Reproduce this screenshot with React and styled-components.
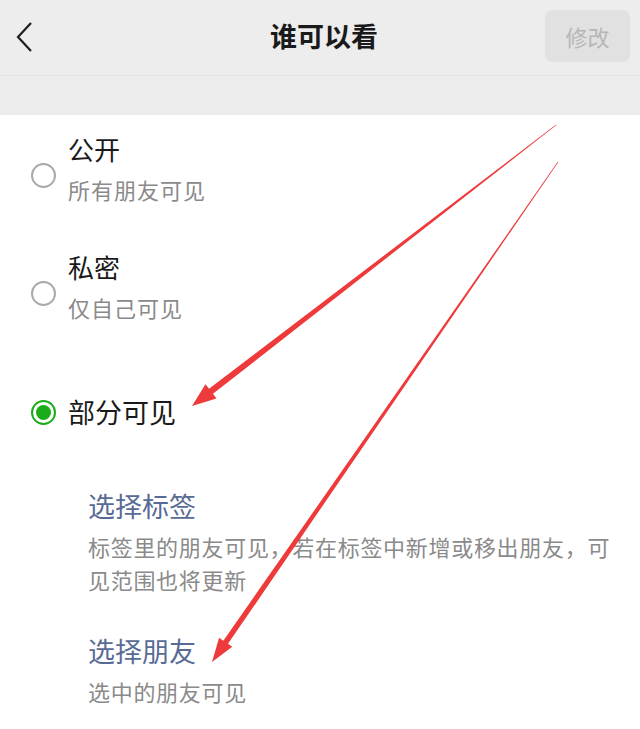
import React from "react";
import styled, { createGlobalStyle } from "styled-components";

const GlobalStyle = createGlobalStyle`
  html, body {
    margin: 0;
    padding: 0;
    background: #ffffff;
    font-family: "Noto Sans CJK SC", "Noto Sans", sans-serif;
  }
`;

function Arrow({ x1, y1, x2, y2, w0, w1, headLen, headW }) {
  const dx = x2 - x1;
  const dy = y2 - y1;
  const len = Math.sqrt(dx * dx + dy * dy);
  const ux = dx / len;
  const uy = dy / len;
  const nx = -uy;
  const ny = ux;
  // base of the head
  const bx = x2 - ux * headLen;
  const by = y2 - uy * headLen;
  const pts = [
    [x1 + nx * w0, y1 + ny * w0],
    [bx + nx * w1, by + ny * w1],
    [bx + nx * headW, by + ny * headW],
    [x2, y2],
    [bx - nx * headW, by - ny * headW],
    [bx - nx * w1, by - ny * w1],
    [x1 - nx * w0, y1 - ny * w0],
  ];
  return (
    <polygon
      points={pts.map((p) => p.join(",")).join(" ")}
      fill="#ee3a3a"
    />
  );
}

function Radio({ checked }) {
  return (
    <RadioMark checked={checked}>
      {checked && <RadioDot />}
    </RadioMark>
  );
}

export default function App() {
  return (
    <Page>
      <GlobalStyle />
      <Header>
        <BackButton>
          <svg width="22" height="34" viewBox="0 0 22 34">
            <polyline
              points="16,3 3,17 16,31"
              fill="none"
              stroke="#1f1f1f"
              strokeWidth="2.2"
              strokeLinejoin="miter"
            />
          </svg>
        </BackButton>
        <Title>谁可以看</Title>
        <EditButton>修改</EditButton>
      </Header>
      <Gap />
      <Body>
        <Option top={14}>
          <RadioCol offset={12}>
            <Radio />
          </RadioCol>
          <TextCol>
            <OptTitle>公开</OptTitle>
            <OptSub>所有朋友可见</OptSub>
          </TextCol>
        </Option>
        <Option top={38}>
          <RadioCol offset={12}>
            <Radio />
          </RadioCol>
          <TextCol>
            <OptTitle>私密</OptTitle>
            <OptSub>仅自己可见</OptSub>
          </TextCol>
        </Option>
        <Option top={63}>
          <RadioCol offset={0}>
            <Radio checked />
          </RadioCol>
          <TextCol>
            <OptTitle big>部分可见</OptTitle>
          </TextCol>
        </Option>
        <SubList>
          <SubItem top={50}>
            <LinkTitle>选择标签</LinkTitle>
            <Desc>标签里的朋友可见，若在标签中新增或移出朋友，可见范围也将更新</Desc>
          </SubItem>
          <SubItem top={33}>
            <LinkTitle>选择朋友</LinkTitle>
            <Desc>选中的朋友可见</Desc>
          </SubItem>
        </SubList>
      </Body>
      <Overlay width="640" height="729" viewBox="0 0 640 729">
        <Arrow x1={556} y1={125} x2={192} y2={406} w0={0.3} w1={3.2} headLen={24} headW={9} />
        <Arrow x1={558} y1={162} x2={212} y2={662} w0={0.3} w1={2.8} headLen={24} headW={8} />
      </Overlay>
    </Page>
  );
}

const Page = styled.div`
  position: relative;
  width: 640px;
  height: 729px;
  overflow: hidden;
  background: #ffffff;
`;

const Header = styled.div`
  height: 76px;
  box-sizing: border-box;
  display: flex;
  align-items: center;
  justify-content: space-between;
  padding: 0 10px 4px 15px;
  background: #ededed;
  border-bottom: 1px solid #e3e3e3;
`;

const BackButton = styled.div`
  width: 80px;
  display: flex;
  align-items: center;
  margin-top: 2px;
`;

const Title = styled.div`
  font-size: 27px;
  font-weight: 700;
  color: #1a1a1a;
  margin-left: 8px;
`;

const EditButton = styled.div`
  width: 85px;
  height: 52px;
  border-radius: 7px;
  background: #e1e1e1;
  color: #b6b6b6;
  font-size: 22px;
  display: flex;
  align-items: center;
  justify-content: center;
`;

const Gap = styled.div`
  height: 39px;
  background: #ededed;
`;

const Body = styled.div`
  display: flex;
  flex-direction: column;
`;

const Option = styled.div`
  display: flex;
  align-items: center;
  margin-top: ${(p) => p.top}px;
`;

const RadioCol = styled.div`
  width: 68px;
  padding-left: 31px;
  box-sizing: border-box;
  display: flex;
  margin-top: ${(p) => p.offset}px;
`;

const RadioMark = styled.div`
  width: 25px;
  height: 25px;
  box-sizing: border-box;
  border-radius: 50%;
  border: 2px solid ${(p) => (p.checked ? "#1aad19" : "#a9a9a9")};
  display: flex;
  align-items: center;
  justify-content: center;
`;

const RadioDot = styled.div`
  width: 15px;
  height: 15px;
  border-radius: 50%;
  background: #1aad19;
`;

const TextCol = styled.div`
  display: flex;
  flex-direction: column;
`;

const OptTitle = styled.div`
  font-size: ${(p) => (p.big ? 27 : 26)}px;
  line-height: ${(p) => (p.big ? 44 : 40)}px;
  color: #1a1a1a;
`;

const OptSub = styled.div`
  font-size: 22px;
  line-height: 40px;
  color: #8a8a8a;
  letter-spacing: 1px;
`;

const SubList = styled.div`
  display: flex;
  flex-direction: column;
  padding-left: 88px;
  padding-right: 20px;
`;

const SubItem = styled.div`
  display: flex;
  flex-direction: column;
  margin-top: ${(p) => p.top}px;
`;

const LinkTitle = styled.div`
  font-size: 27px;
  line-height: 44px;
  color: #576b95;
`;

const Desc = styled.div`
  font-size: 22px;
  line-height: 33px;
  color: #8a8a8a;
  max-width: 530px;
  letter-spacing: 0.7px;
  margin-top: 2px;
`;

const Overlay = styled.svg`
  position: absolute;
  left: 0;
  top: 0;
  pointer-events: none;
`;
